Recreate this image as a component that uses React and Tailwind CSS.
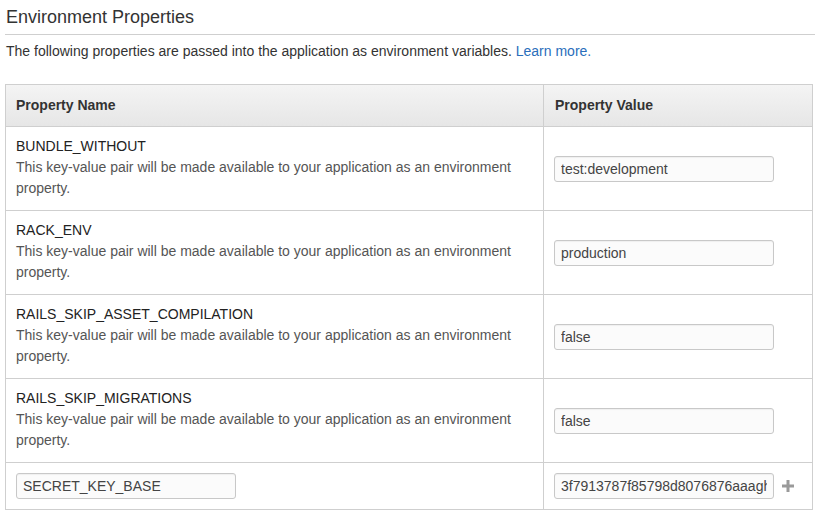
import React from "react";

const rows = [
  { name: "BUNDLE_WITHOUT", value: "test:development" },
  { name: "RACK_ENV", value: "production" },
  { name: "RAILS_SKIP_ASSET_COMPILATION", value: "false" },
  { name: "RAILS_SKIP_MIGRATIONS", value: "false" },
];

const inputClass =
  "w-[220px] h-[26px] px-[6px] border border-[#c8c8c8] rounded-[3px] bg-[#fbfbfb] text-[14px] text-[#444] outline-none shadow-[inset_0_1px_1px_rgba(0,0,0,0.05)]";

export default function App() {
  return (
    <div
      className="bg-white w-[820px] h-[522px] px-[5px] text-[#333]"
      style={{ fontFamily: '"Liberation Sans", Arial, sans-serif' }}
    >
      <h2 className="pt-[5px] pb-[5px] pl-px text-[18px] leading-[24px] text-[#333] border-b border-[#cfcfcf] w-[810px]">
        Environment Properties
      </h2>
      <p className="mt-[7px] pl-px text-[14px] leading-[18px]">
        The following properties are passed into the application as environment
        variables. <a className="text-[#2a6ebb]">Learn more.</a>
      </p>

      <table className="mt-[24px] w-[808px] border-collapse text-[14px]">
        <thead>
          <tr className="bg-gradient-to-b from-[#f4f4f4] to-[#e6e6e6]">
            <th className="w-[538px] h-[42px] px-[10px] text-left font-bold border border-[#cfcfcf]">
              Property Name
            </th>
            <th className="px-[11px] text-left font-bold border border-[#cfcfcf]">
              Property Value
            </th>
          </tr>
        </thead>
        <tbody>
          {rows.map((row) => (
            <tr key={row.name} className="h-[84px]">
              <td className="px-[10px] py-[9px] align-top border border-[#cfcfcf] leading-[21px]">
                <div className="text-[#222]">{row.name}</div>
                <div className="text-[#555]">
                  This key-value pair will be made available to your application
                  as an environment property.
                </div>
              </td>
              <td className="px-[10px] align-middle border border-[#cfcfcf]">
                <input className={inputClass} defaultValue={row.value} readOnly />
              </td>
            </tr>
          ))}
          <tr className="h-[47px]">
            <td className="px-[10px] align-middle border border-[#cfcfcf]">
              <input
                className={inputClass}
                defaultValue="SECRET_KEY_BASE"
                readOnly
              />
            </td>
            <td className="px-[10px] align-middle border border-[#cfcfcf]">
              <div className="flex items-center gap-[8px]">
                <input
                  className={inputClass}
                  defaultValue="3f7913787f85798d8076876aaagh"
                  readOnly
                />
                <svg width="12" height="12" viewBox="0 0 12 12">
                  <rect x="4.5" y="0" width="3" height="12" fill="#9a9a9a" />
                  <rect x="0" y="4.5" width="12" height="3" fill="#9a9a9a" />
                </svg>
              </div>
            </td>
          </tr>
        </tbody>
      </table>
    </div>
  );
}
